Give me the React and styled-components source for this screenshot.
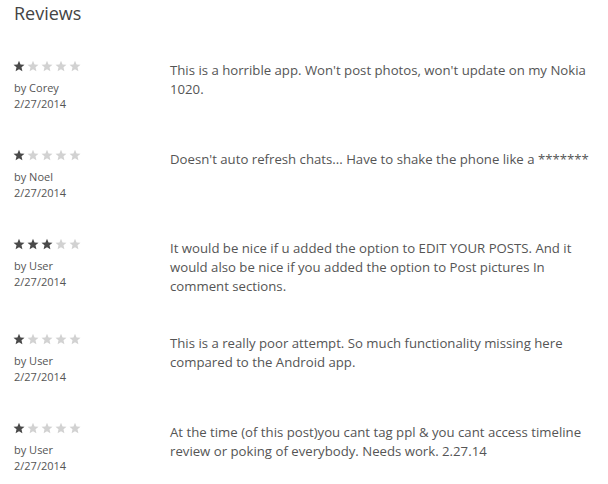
import React from 'react';
import styled, { createGlobalStyle } from 'styled-components';

const GlobalStyle = createGlobalStyle`
  body {
    margin: 0;
    background: #fff;
    font-family: 'Open Sans', 'Noto Sans', sans-serif;
    color: #555;
  }
`;

const Page = styled.div`
  width: 608px;
  padding: 0 0 0 13px;
  box-sizing: border-box;
`;

const Title = styled.h2`
  margin: 0;
  font-size: 18px;
  font-weight: 400;
  line-height: 26px;
  color: #444;
  padding-left: 1px;
`;

const List = styled.div`
  margin-top: 33px;
  display: flex;
  flex-direction: column;
`;

const Row = styled.div`
  display: flex;
  align-items: flex-start;
  margin-bottom: 36px;
`;

const Meta = styled.div`
  width: 157px;
  flex-shrink: 0;
  display: flex;
  flex-direction: column;
`;

const Stars = styled.div`
  display: flex;
  gap: 2px;
  height: 14px;
  align-items: center;
  margin-bottom: 7px;
`;

const Author = styled.span`
  font-size: 11px;
  line-height: 16px;
  color: #555;
  padding-left: 1px;
`;

const Body = styled.p`
  margin: 0;
  padding-top: 2px;
  width: 425px;
  font-size: 13.2px;
  line-height: 19px;
  color: #555;
`;

const Star = ({ on }) => (
  <svg width="12" height="12" viewBox="0 0 24 24">
    <path
      d="M12 1.5l3.1 7.3 7.9.7-6 5.2 1.8 7.8L12 18.4l-6.8 4.1 1.8-7.8-6-5.2 7.9-.7z"
      fill={on ? '#4a4a4a' : '#d2d2d2'}
    />
  </svg>
);

const reviews = [
  { rating: 1, by: 'Corey', text: "This is a horrible app. Won't post photos, won't update on my Nokia 1020." },
  { rating: 1, by: 'Noel', text: "Doesn't auto refresh chats... Have to shake the phone like a *******" },
  { rating: 3, by: 'User', text: 'It would be nice if u added the option to EDIT YOUR POSTS. And it would also be nice if you added the option to Post pictures In comment sections.' },
  { rating: 1, by: 'User', text: 'This is a really poor attempt. So much functionality missing here compared to the Android app.' },
  { rating: 1, by: 'User', text: 'At the time (of this post)you cant tag ppl & you cant access timeline review or poking of everybody. Needs work. 2.27.14' },
];

export default function App() {
  return (
    <Page>
      <GlobalStyle />
      <Title>Reviews</Title>
      <List>
        {reviews.map((r, i) => (
          <Row key={i}>
            <Meta>
              <Stars>
                {[1, 2, 3, 4, 5].map(n => <Star key={n} on={n <= r.rating} />)}
              </Stars>
              <Author>by {r.by}</Author>
              <Author>2/27/2014</Author>
            </Meta>
            <Body>{r.text}</Body>
          </Row>
        ))}
      </List>
    </Page>
  );
}
